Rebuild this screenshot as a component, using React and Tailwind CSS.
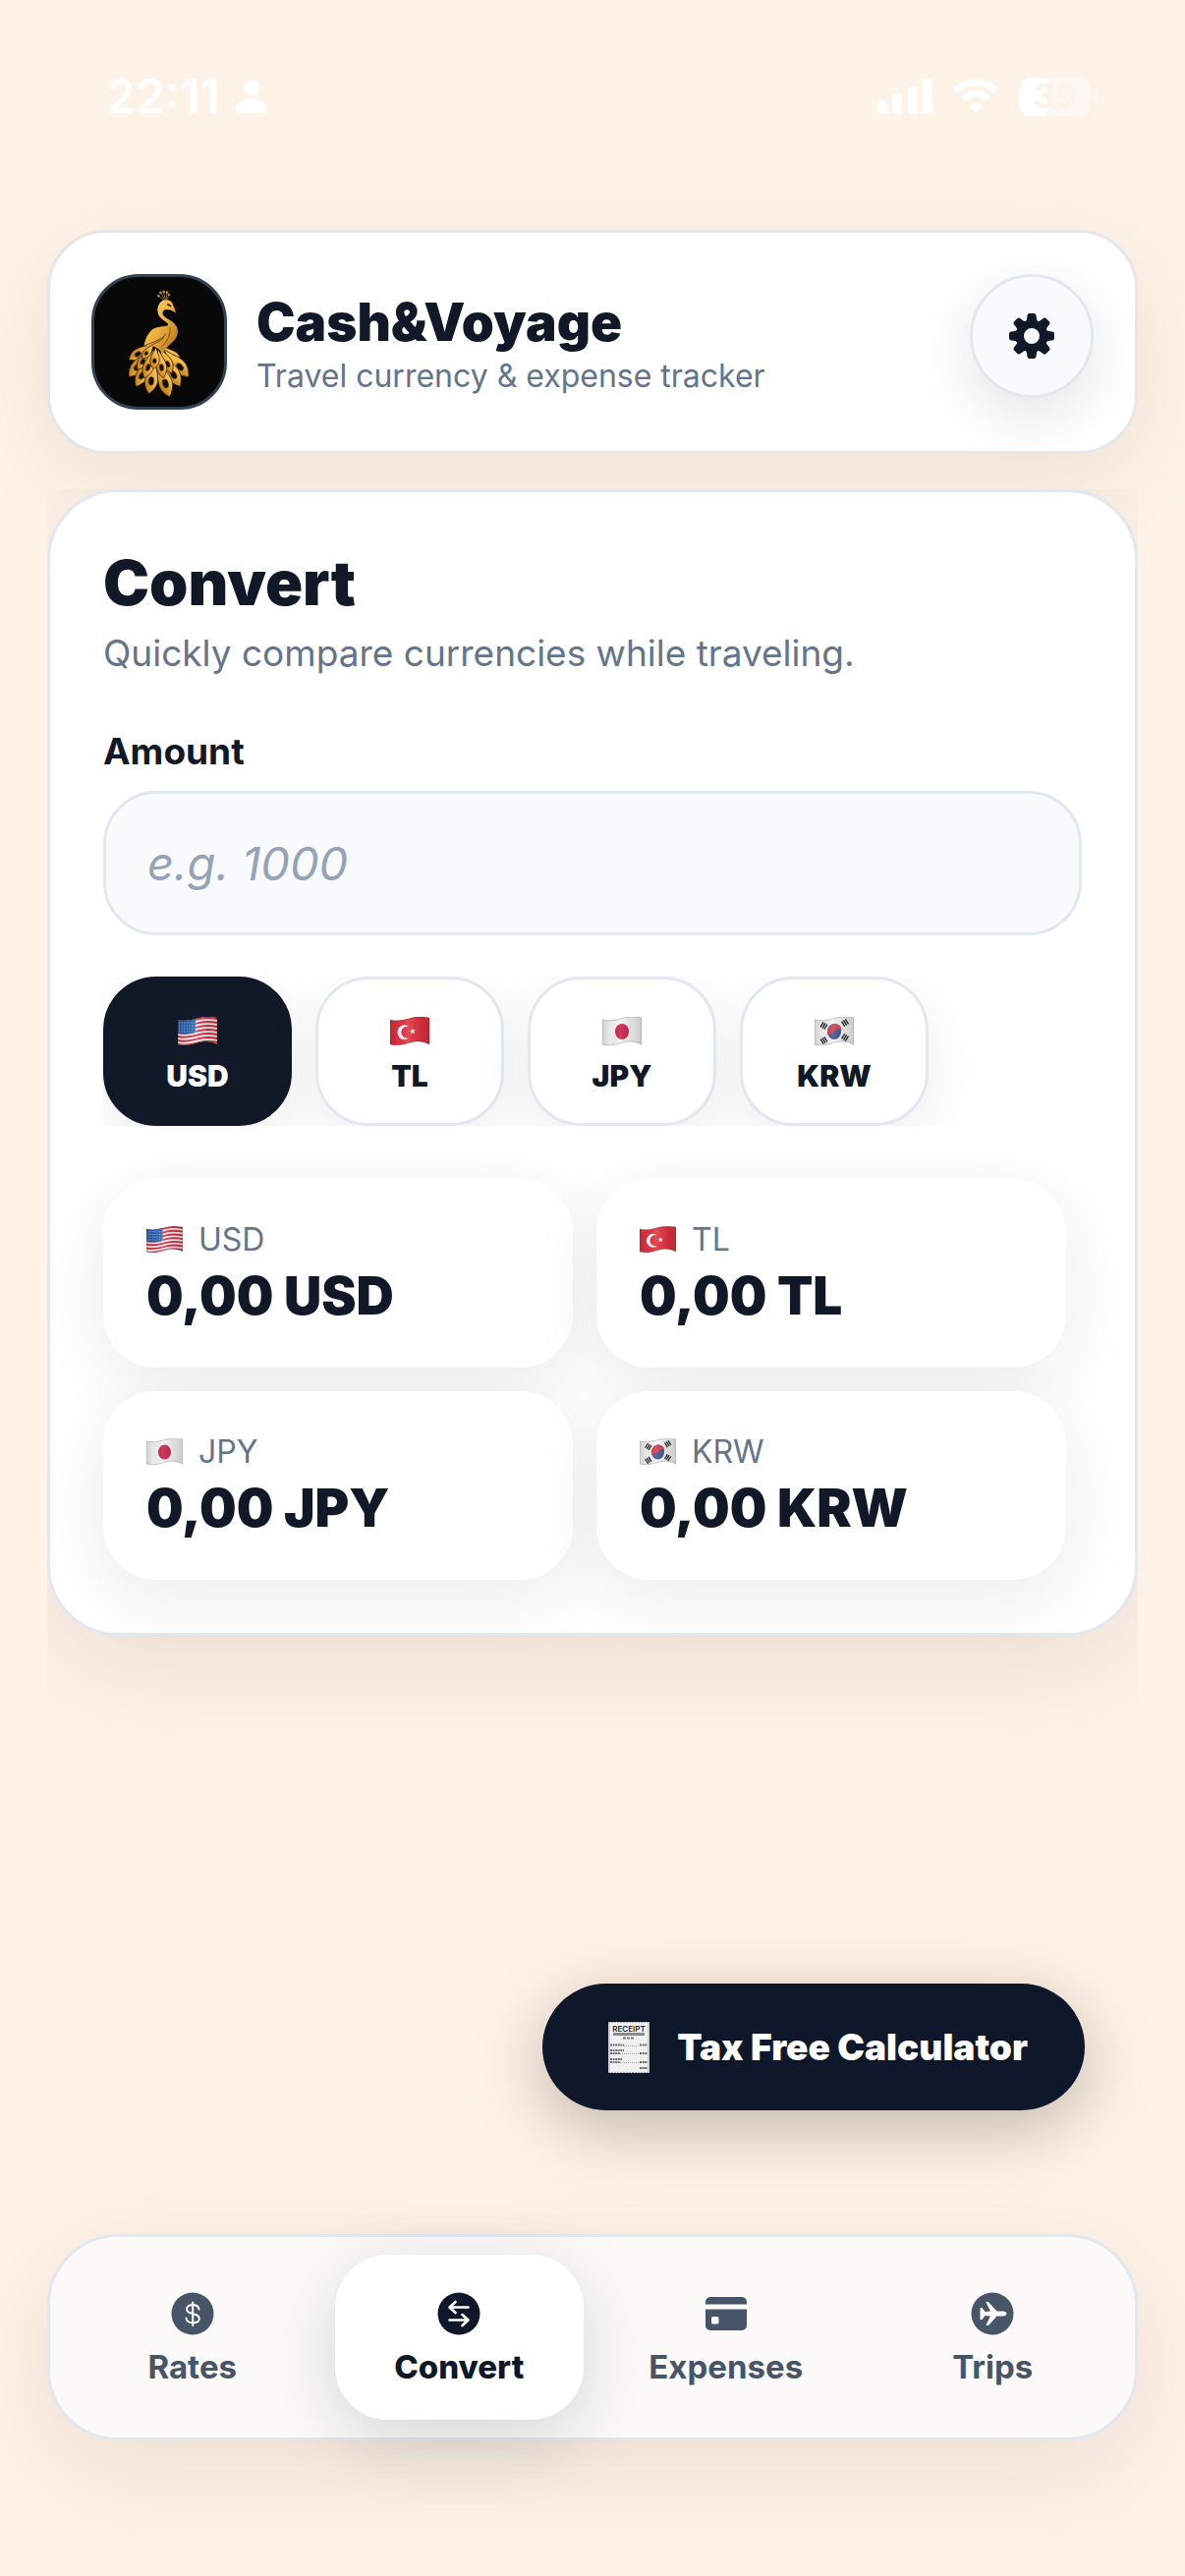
import { useId, useState } from 'react';

const currencies = ['USD', 'TL', 'JPY', 'KRW'];

// [baseX, baseY, tipX, tipY, halfWidth]
const feathers = [
    [190, 214, 114, 262, 20],
    [186, 230, 114, 314, 23],
    [186, 250, 136, 344, 22],
    [218, 220, 272, 276, 20],
    [222, 230, 298, 314, 24],
    [214, 244, 272, 344, 24],
    [194, 258, 176, 366, 24],
    [202, 262, 240, 376, 25],
    [186, 224, 140, 292, 18],
    [210, 224, 246, 304, 18],
    [192, 228, 162, 318, 19],
    [204, 228, 220, 318, 19],
    [198, 222, 190, 290, 17],
    [192, 214, 154, 258, 14],
];

const Feather = ({ feather, gold }) => {
    const [bx, by, tx, ty, w] = feather;
    const len = Math.hypot(tx - bx, ty - by);
    const angle = (Math.atan2(ty - by, tx - bx) * 180) / Math.PI;
    return (
        <g transform={`translate(${bx} ${by}) rotate(${angle})`}>
            <path
                d={`M0 0 C${len * 0.4} ${-w * 0.4} ${len * 0.6} ${-w * 1.7} ${len} 0 C${len * 0.7} ${w * 1.5} ${len * 0.4} ${w * 0.6} 0 0Z`}
                fill={gold}
                stroke="#1b1204"
                strokeWidth="2"
            />
            <ellipse cx={len * 0.64} cy="0" rx={len * 0.12} ry={w * 0.36} fill="#120d06" stroke="#8a5a12" strokeWidth="2" />
        </g>
    );
};

const PeacockLogo = () => {
    const id = useId();
    const gold = `url(#${id})`;
    return (
        <svg viewBox="8 8 398 398" className="h-full w-full" role="img" aria-label="Cash&Voyage logo">
            <defs>
                <linearGradient id={id} x1="0" y1="0" x2="1" y2="1">
                    <stop offset="0" stopColor="#ffdf83" />
                    <stop offset="0.5" stopColor="#eeae3a" />
                    <stop offset="1" stopColor="#a86c14" />
                </linearGradient>
            </defs>
            {feathers.map((f) => (
                <Feather key={f.join()} feather={f} gold={gold} />
            ))}
            {/* crest */}
            <g stroke="#c98c28" strokeWidth="2" fill="#e0a63b">
                <path d="M222 80 L206 66 M224 78 L212 56 M226 78 L221 53 M228 78 L231 54 M230 80 L237 62" fill="none" />
                <circle cx="205" cy="66" r="3" />
                <circle cx="211" cy="56" r="3" />
                <circle cx="221" cy="53" r="3" />
                <circle cx="231" cy="55" r="3" />
                <circle cx="237" cy="62" r="3" />
            </g>
            {/* head, neck and body */}
            <path
                d="M226 78 C240 76 250 86 251 98 C256 106 257 112 257 119 C251 112 243 108 234 108 C222 107 217 112 218 121 C222 138 264 142 264 174 C264 208 230 212 219 244 L205 228 L186 218 L160 219 C166 192 178 162 212 160 C226 159 236 158 234 152 C228 142 204 137 202 113 C201 94 212 79 226 78Z"
                fill={gold}
            />
            <path d="M240 162 C243 190 228 210 212 224" fill="none" stroke="#7d4d0c" strokeWidth="3" />
            <path d="M228 182 C214 202 192 206 160 219 M222 194 C208 208 194 210 182 218" fill="none" stroke="#6d430b" strokeWidth="3" />
            <path d="M232 91 L244 98" stroke="#251803" strokeWidth="5" />
        </svg>
    );
};

const wave = 'M0 3 C8 5 14 3 22 1 S35 0 40 1 V28 C34 25 28 24 21 26 S8 30 0 28Z';

const Trigram = ({ x, y, angle }) => (
    <g transform={`translate(${x} ${y}) rotate(${angle})`} stroke="#26282b" strokeWidth="1.4">
        <path d="M-3 -2.2 H3 M-3 0 H3 M-3 2.2 H3" />
    </g>
);

const Flag = ({ code, className }) => {
    const id = useId();
    return (
        <svg viewBox="0 0 40 30" className={className} aria-hidden="true">
            <defs>
                <clipPath id={`${id}c`}>
                    <path d={wave} />
                </clipPath>
                <linearGradient id={`${id}s`}>
                    <stop offset="0" stopColor="#000" stopOpacity="0.14" />
                    <stop offset="0.2" stopColor="#000" stopOpacity="0.04" />
                    <stop offset="0.45" stopColor="#fff" stopOpacity="0.12" />
                    <stop offset="0.8" stopColor="#000" stopOpacity="0.1" />
                    <stop offset="1" stopColor="#000" stopOpacity="0.16" />
                </linearGradient>
            </defs>
            <g clipPath={`url(#${id}c)`}>
                {code === 'USD' && (
                    <>
                        <path fill="#f4f4f6" d="M0 0H40V30H0z" />
                        {[0, 1, 2, 3, 4, 5, 6].map((i) => (
                            <path
                                key={i}
                                d="M0 4 C8 6 14 4 22 2 S35 1 40 2"
                                transform={`translate(0 ${i * 4})`}
                                fill="none"
                                stroke="#dc2c40"
                                strokeWidth="2"
                            />
                        ))}
                        <path fill="#2f62ad" d="M0 0H18V16C12 18 6 18 0 17z" />
                        <path d="M1 6H18M1 9H18M1 12H18M1 15H18" stroke="#a9c4ec" strokeWidth="1" strokeDasharray="1 1.6" />
                    </>
                )}
                {code === 'TL' && (
                    <>
                        <path fill="#e2313f" d="M0 0H40V30H0z" />
                        <path d="M19 10 A7 7.5 0 1 0 19 21.500 A6 6 0 1 1 19 10Z" fill="#fff" />
                        <path d="M23 11.500 L23.700 13.800 L26 13.600 L24.200 15 L25 17.300 L23 16 L21 17.500 L21.500 15 L19.700 14 L22 13.800Z" fill="#fff" />
                    </>
                )}
                {code === 'JPY' && (
                    <>
                        <path fill="#f3f3f3" d="M0 0H40V30H0z" />
                        <ellipse cx="20" cy="15" rx="7" ry="8" fill="#c91f46" />
                    </>
                )}
                {code === 'KRW' && (
                    <>
                        <path fill="#f3f3f3" d="M0 0H40V30H0z" />
                        <ellipse cx="20" cy="15" rx="7" ry="8" fill="#3d5590" />
                        <path d="M13.500 18 C12 11 17 7 21 7 C26 8 28 11 27 14 C24 11 21 13 20 15 C18 18 15 18 13.500 18Z" fill="#d23b4b" />
                        <Trigram x={9.500} y={9} angle={-58} />
                        <Trigram x={31} y={6} angle={58} />
                        <Trigram x={9.500} y={24} angle={58} />
                        <Trigram x={31} y={21} angle={-58} />
                    </>
                )}
                <path fill={`url(#${id}s)`} d="M0 0H40V30H0z" />
            </g>
            <path d={wave} fill="none" stroke="#000" strokeOpacity="0.2" strokeWidth="1" />
        </svg>
    );
};

const ReceiptIcon = () => (
    <svg viewBox="0 0 42 52" className="h-13 w-[42px]" aria-hidden="true">
        <path fill="#f0f0f0" d="M0 0H42V52H0z" />
        <path d="M1 0V52M41 0V52" stroke="#cfcfcf" strokeWidth="2" />
        <path d="M0 51.500H42M0 0.500H42" stroke="#a9a9a9" strokeDasharray="2 1" />
        <text x="21" y="10" textAnchor="middle" fontSize="8" fontWeight="600" fill="#2b2b2b">RECEIPT</text>
        <path d="M5 12.500H37" stroke="#8b8b8b" strokeWidth="3" />
        <path d="M15 16.500H26" stroke="#7a7a7a" strokeWidth="2" strokeDasharray="3 1" />
        <g stroke="#6f6f6f" strokeWidth="2" strokeDasharray="2 0.600">
            <path d="M2 23.500H16M32 23.500H40M2 29H16M2 32H12M32 32H40M2 38H14M2 41H12M32 41H40M32 47H40" />
        </g>
        <path d="M16 24.500H31M12 32.500H31M12 41.500H31" stroke="#a5a5a5" strokeDasharray="1 1" />
    </svg>
);

const GearIcon = () => (
    <svg viewBox="-23 -23 46 46" className="h-[46px] w-[46px] fill-[#111827]" aria-hidden="true">
        {[0, 45, 90, 135, 180, 225, 270, 315].map((a) => (
            <path
                key={a}
                transform={`rotate(${a})`}
                d="M-7 -14 C-5 -15 -5 -17 -4.500 -21 Q-4 -23 -2.500 -23 H2.500 Q4 -23 4.500 -21 C5 -17 5 -15 7 -14Z"
            />
        ))}
        <path fillRule="evenodd" d="M0 -16.500A16.500 16.500 0 1 1 0 16.500A16.500 16.500 0 1 1 0 -16.500ZM0 -8A8 8 0 1 0 0 8A8 8 0 1 0 0 -8Z" />
    </svg>
);

const RatesIcon = () => (
    <svg viewBox="0 0 48 48" className="h-12 w-12" aria-hidden="true">
        <circle cx="24" cy="24" r="21.500" fill="currentColor" />
        <path
            d="M30.500 19.500C30 16.500 27.500 15 24 15C20.500 15 18 16.800 18 19.500C18 22 20 23 24 24C28.500 25 30.800 26.300 30.800 29C30.800 31.800 28 33.300 24.300 33.300C20.500 33.300 17.800 31.500 17.500 28.500M24.200 12.500V36"
            fill="none"
            stroke="#fff"
            strokeWidth="2"
            strokeLinecap="round"
        />
    </svg>
);

const ConvertIcon = () => (
    <svg viewBox="0 0 48 48" className="h-12 w-12" aria-hidden="true">
        <circle cx="24" cy="24" r="21.500" fill="currentColor" />
        <path
            d="M33.500 17.500H14.500M20.500 12L14.500 17.500L20.500 23M14.500 30.500H33.500M27.500 25L33.500 30.500L27.500 36"
            fill="none"
            stroke="#fff"
            strokeWidth="2.600"
            strokeLinecap="round"
            strokeLinejoin="round"
        />
    </svg>
);

const ExpensesIcon = () => (
    <svg viewBox="0 0 48 48" className="h-12 w-12" aria-hidden="true">
        <path
            fill="currentColor"
            fillRule="evenodd"
            d="M8 7H40A5 5 0 0 1 45 12V14.500H3V12A5 5 0 0 1 8 7ZM3 19.500H45V36A5 5 0 0 1 40 41H8A5 5 0 0 1 3 36ZM10.500 27Q9 27 9 28.500V33Q9 34.500 10.500 34.500H15Q16.500 34.500 16.500 33V28.500Q16.500 27 15 27Z"
        />
    </svg>
);

const TripsIcon = () => (
    <svg viewBox="0 0 48 48" className="h-12 w-12" aria-hidden="true">
        <circle cx="24" cy="24" r="21.500" fill="currentColor" />
        <path
            fill="#fff"
            d="M11.500 18H13.500L16.500 22L22 21.500L17.500 12.500Q17.500 12 18.500 12H20L28.500 21.500H35.500Q38.500 22.200 38.500 24Q38.500 25.800 35.500 26.500H28.500L20 36H18.500Q17.500 36 17.500 35.500L22 26.500L16.500 26L13.500 30H11.500Z"
        />
    </svg>
);

const tabs = [
    { label: 'Rates', Icon: RatesIcon },
    { label: 'Convert', Icon: ConvertIcon },
    { label: 'Expenses', Icon: ExpensesIcon },
    { label: 'Trips', Icon: TripsIcon },
];

const StatusBar = () => (
    <div className="flex h-[186px] items-start justify-between pt-18 pr-10 pl-15 text-white">
        <div className="flex h-13 items-center gap-4">
            <span className="text-[48px] leading-13 font-semibold">22:11</span>
            <svg viewBox="0 0 32 34" className="h-[34px] w-8 fill-white" aria-hidden="true">
                <circle cx="16" cy="8" r="8" />
                <path d="M0 30C0 24 7 19 16 19S32 24 32 30Q32 34 28 34H4Q0 34 0 30Z" />
            </svg>
        </div>
        <div className="flex h-13 items-center gap-5">
            <svg viewBox="0 0 56 36" className="h-9 w-14 fill-white" aria-hidden="true">
                <rect x="0" y="22" width="10" height="14" rx="3" />
                <rect x="15" y="15" width="10" height="21" rx="3" />
                <rect x="31" y="8" width="10" height="28" rx="3" />
                <rect x="46" y="0" width="10" height="36" rx="3" />
            </svg>
            <svg viewBox="0 0 48 36" className="h-9 w-12" aria-hidden="true">
                <path d="M3 12.500C15 1 33 1 45 12.500M11 21C19 13.500 29 13.500 37 21" fill="none" stroke="#fff" strokeWidth="7" />
                <path d="M16.500 28C21 24 27 24 31.500 28L24 35.500Z" fill="#fff" />
            </svg>
            <div className="flex items-center gap-1">
                <div className="flex h-[39px] w-[73px] items-center justify-center rounded-xl bg-linear-to-r from-white from-39% to-white/50 to-39% text-[34px] leading-9 font-bold text-[#fff2e6]">
                    39
                </div>
                <div className="h-3 w-1 rounded-r-full bg-white/50" />
            </div>
        </div>
    </div>
);

const App = () => {
    const [amount, setAmount] = useState('');
    const [base, setBase] = useState('USD');
    const [tab, setTab] = useState('Convert');

    return (
        <div className="flex min-h-screen flex-col bg-[#fff2e6] px-12 pb-[138px] font-['Inter','Liberation_Sans',sans-serif] text-[#111827]">
            <StatusBar />

            <header className="mt-12 flex items-start rounded-[60px] border-3 border-[#e5e7eb] bg-white p-[42px] shadow-[0_24px_96px_rgba(30,20,30,0.08)]">
                <div className="h-[138px] w-[138px] shrink-0 overflow-hidden rounded-[48px] border-3 border-[#334155] bg-[#080808]">
                    <PeacockLogo />
                </div>
                <div className="ml-[30px] flex-1 self-center pt-2">
                    <h1 className="text-[53px] leading-[62px] font-black">Cash&amp;Voyage</h1>
                    <p className="text-[32px] leading-12 text-[#64748b]">Travel currency &amp; expense tracker</p>
                </div>
                <button
                    type="button"
                    aria-label="Settings"
                    className="flex h-[126px] w-[126px] items-center justify-center rounded-full border-3 border-[#e2e8f0] bg-[#f8fafc] shadow-[0_18px_60px_rgba(0,0,0,0.11)]"
                >
                    <GearIcon />
                </button>
            </header>

            {/* the shadow of the card is cut at the sides of the scroll area */}
            <main className="mt-9 flex-1 overflow-hidden">
                <section className="rounded-[72px] border-3 border-[#e2e8f0] bg-white p-[54px] shadow-[0_30px_110px_rgba(30,20,30,0.09)]">
                    <h2 className="text-[63px] leading-[76px] font-black">Convert</h2>
                    <p className="mt-[10px] text-[37px] leading-12 text-[#64748b]">Quickly compare currencies while traveling.</p>
                    <label htmlFor="amount" className="mt-[52px] block text-[37px] leading-12 font-bold">
                        Amount
                    </label>
                    <input
                        id="amount"
                        type="text"
                        inputMode="decimal"
                        placeholder="e.g. 1000"
                        value={amount}
                        onChange={(e) => setAmount(e.target.value)}
                        className="mt-4 h-[147px] w-full rounded-[54px] border-3 border-[#e2e8f0] bg-[#f8fafc] px-[42px] text-[47px] outline-none placeholder:text-[#94a3b8] placeholder:italic"
                    />

                    <div className="mt-[42px] flex gap-6 overflow-hidden">
                        {currencies.map((code) => (
                            <button
                                key={code}
                                type="button"
                                onClick={() => setBase(code)}
                                className={`flex h-[152px] w-48 flex-col items-center justify-center gap-3 rounded-[54px] border-3 pt-2 text-[30px] leading-9 font-black shadow-[0_18px_60px_rgba(0,0,0,0.07)] ${
                                    base === code ? 'border-[#111827] bg-[#111827] text-white' : 'border-[#e2e8f0] bg-white'
                                }`}
                            >
                                <Flag code={code} className="h-[30px] w-10" />
                                {code}
                            </button>
                        ))}
                    </div>

                    <div className="mt-[54px] mr-4 grid grid-cols-2 gap-6">
                        {currencies.map((code) => (
                            <div key={code} className="h-48 rounded-[54px] bg-white px-11 pt-10 shadow-[0_18px_72px_rgba(0,0,0,0.08)]">
                                <p className="flex items-center gap-4 text-[32px] leading-11 text-[#64748b]">
                                    <Flag code={code} className="h-7 w-[37px]" />
                                    {code}
                                </p>
                                <p className="text-[53px] leading-[70px] font-black">0,00 {code}</p>
                            </div>
                        ))}
                    </div>
                </section>
            </main>

            <button
                type="button"
                className="mr-[54px] flex h-[129px] items-center gap-7 self-end rounded-full bg-[#0f172a] pr-[58px] pl-[67px] text-[37px] font-black text-white shadow-[0_18px_72px_rgba(0,0,0,0.25)]"
            >
                <ReceiptIcon />
                Tax Free Calculator
            </button>

            <nav className="mt-[126px] grid grid-cols-4 gap-[18px] rounded-[72px] border-3 border-[#e2e8f0] bg-[#fbfaf8] p-[18px] shadow-[0_30px_110px_rgba(30,20,30,0.09)]">
                {tabs.map(({ label, Icon }) => (
                    <button
                        key={label}
                        type="button"
                        onClick={() => setTab(label)}
                        aria-current={tab === label ? 'page' : undefined}
                        className={`flex h-[168px] flex-col items-center justify-center gap-[10px] rounded-[54px] pt-[2px] text-[33px] leading-10 ${
                            tab === label
                                ? 'bg-white font-extrabold text-[#0f172a] shadow-[0_18px_72px_rgba(15,23,42,0.16)]'
                                : 'font-bold text-[#475569]'
                        }`}
                    >
                        <Icon />
                        {label}
                    </button>
                ))}
            </nav>
        </div>
    );
};

export default App;
